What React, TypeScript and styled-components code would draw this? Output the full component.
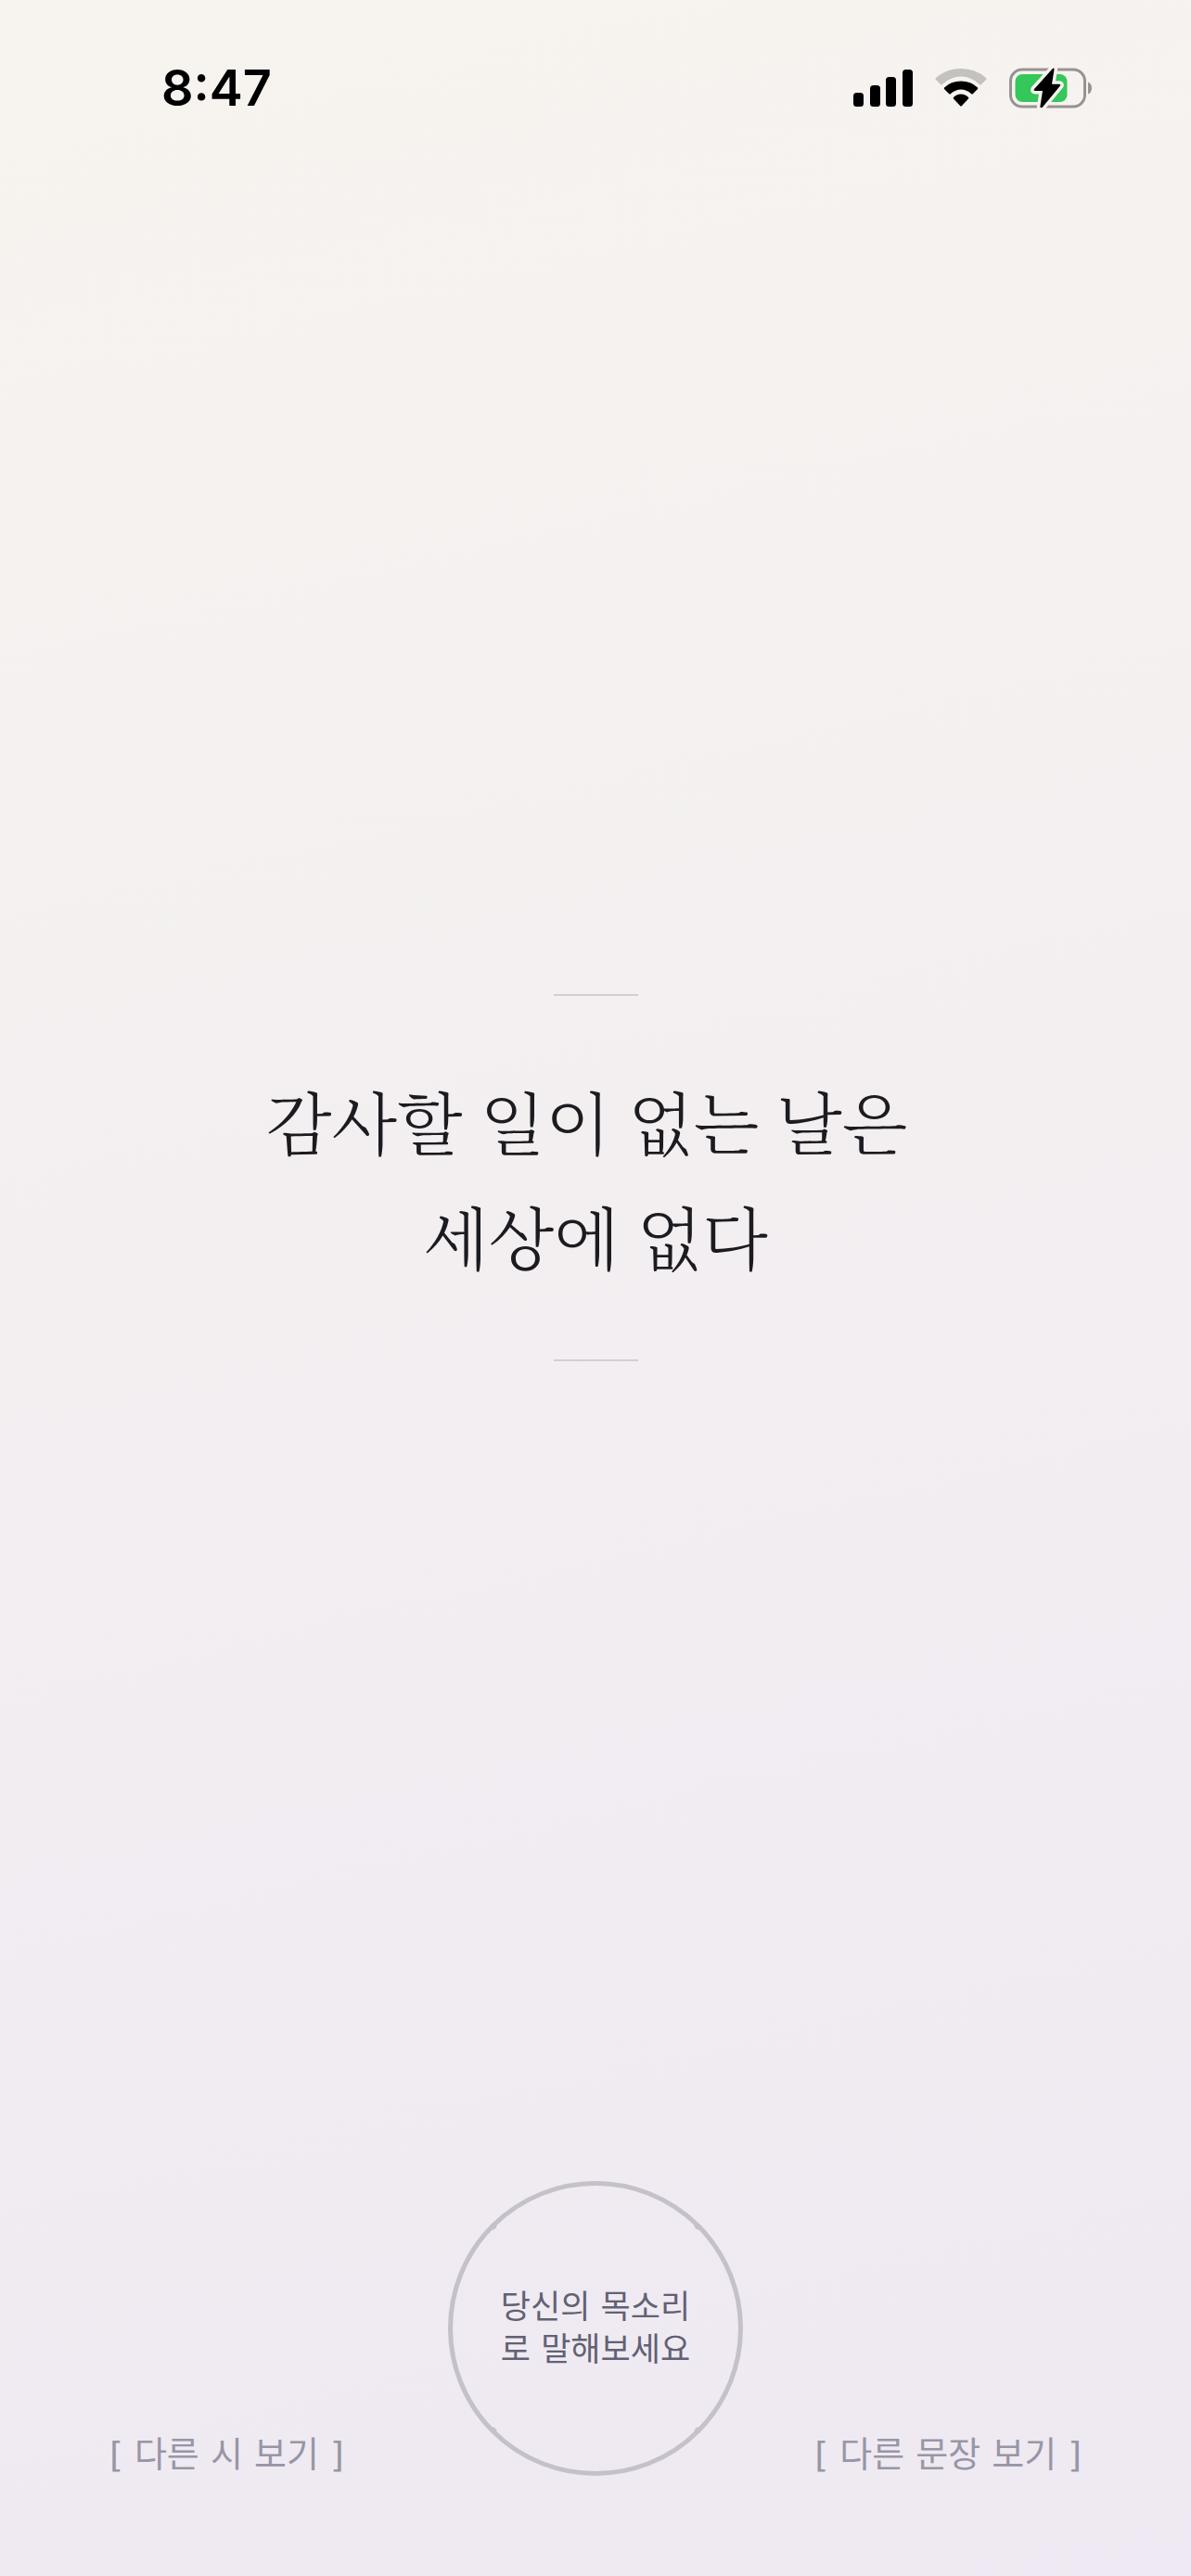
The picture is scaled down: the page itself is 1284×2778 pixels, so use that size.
import React from "react";
import styled, { createGlobalStyle } from "styled-components";

const Global = createGlobalStyle`
  * { box-sizing: border-box; }
  body { margin: 0; }
`;

const Screen = styled.main`
  min-height: 100vh;
  display: flex;
  flex-direction: column;
  font-family: "DejaVu Sans", "Noto Sans CJK KR", sans-serif;
  background: linear-gradient(167deg, #f7f4ef 0%, #f3eff1 46%, #eee9f2 100%);
`;

const StatusBar = styled.header`
  display: flex;
  justify-content: space-between;
  align-items: center;
  height: 190px;
  padding: 0 106px 0 174px;
  color: #000;
`;

const Clock = styled.time`
  font: 600 54px/64px Inter, sans-serif;
`;

const StatusIcons = styled.div`
  display: flex;
  align-items: center;
  gap: 24px;
`;

const QuoteArea = styled.section`
  flex: 1;
  display: flex;
  flex-direction: column;
  align-items: center;
  justify-content: center;
  gap: 72px;
  padding-bottom: 2px;
`;

const Divider = styled.hr`
  width: 91px;
  height: 2px;
  margin: 0;
  border: 0;
  background: #d2cfd1;
`;

const Quote = styled.h1`
  margin: 0;
  font-family: "Noto Serif CJK KR", "Noto Sans CJK KR", serif;
  font-size: 73px;
  font-weight: 300;
  line-height: 124px;
  text-align: center;
  color: #1c1b20;
`;

const Actions = styled.footer`
  display: grid;
  grid-template-columns: 1fr auto 1fr;
  align-items: end;
  padding: 0 118px 108px;
`;

const TextButton = styled.button<{ $align: "start" | "end" }>`
  justify-self: ${(p) => p.$align};
  padding: 0;
  border: 0;
  background: none;
  font-family: inherit;
  font-size: 38px;
  line-height: 46px;
  white-space: nowrap;
  color: #9896a6;
`;

const ring = "#c4c1c8";

/* The ring carries a small bead at each diagonal. */
const VoiceButton = styled.button`
  width: 318px;
  height: 318px;
  padding: 0;
  border: 5px solid ${ring};
  border-radius: 50%;
  background:
    radial-gradient(circle at 48px 48px, ${ring} 4px, transparent 5px) border-box,
    radial-gradient(circle at 270px 48px, ${ring} 4px, transparent 5px) border-box,
    radial-gradient(circle at 48px 270px, ${ring} 4px, transparent 5px) border-box,
    radial-gradient(circle at 270px 270px, ${ring} 4px, transparent 5px) border-box;
  font-family: inherit;
  font-size: 35px;
  line-height: 46px;
  color: #626174;
`;

function SignalIcon() {
  return (
    <svg width="64" height="42" viewBox="0 0 64 42" aria-hidden="true">
      <rect x="0" y="26" width="11" height="15" rx="3.5" />
      <rect x="18" y="18" width="11" height="23" rx="3.5" />
      <rect x="35" y="9" width="11" height="32" rx="3.5" />
      <rect x="53" y="1" width="11" height="40" rx="3.5" />
    </svg>
  );
}

function WifiIcon() {
  return (
    <svg width="56" height="42" viewBox="0 0 56 42" aria-hidden="true">
      <path d="M1 12Q0 11 1 10Q12 0 28 0T55 10Q56 11 55 12L50 17Q49 18 48 17Q39 8.500 28 8.500T8 17Q7 18 6 17Z" fill="#c4c2c0" />
      <path d="M10 22Q9.500 21 10 20.500Q17 13.500 28 13.500T46 20.500Q46.500 21 46 22L41 27Q40 28 39 27Q34 22.500 28 22.500T17 27Q16 28 15 27Z" />
      <path d="M20 32.500Q19.300 31.500 20 31Q23 27.500 28 27.500T36 31Q36.700 31.500 36 32.500L29 40Q28 41 27 40Z" />
    </svg>
  );
}

function BatteryIcon() {
  const bolt = "M47 .8 26.800 23.200Q26 25 28 25H36L33.300 42.500Q34.500 44 36 42.500L55 19.500Q56 18 54 17.700H46L48.600 1.500Q48.400 0 47 .8Z";
  return (
    <svg width="90" height="44" viewBox="0 0 90 44" aria-hidden="true">
      <rect x="1.500" y="2" width="80" height="40" rx="12.500" fill="none" stroke="#969492" strokeWidth="3" />
      <path d="M85 15.500Q89 17 89 22T85 28.500Z" fill="#969492" />
      <rect x="6.500" y="7" width="56" height="30" rx="8" fill="#34c759" />
      <path d={bolt} fill="#f6f3ef" stroke="#f6f3ef" strokeWidth="7" strokeLinejoin="round" />
      <path d={bolt} />
    </svg>
  );
}

export default function App() {
  return (
    <Screen>
      <Global />
      <StatusBar>
        <Clock>8:47</Clock>
        <StatusIcons>
          <SignalIcon />
          <WifiIcon />
          <BatteryIcon />
        </StatusIcons>
      </StatusBar>
      <QuoteArea>
        <Divider />
        <Quote>
          감사할 일이 없는 날은&nbsp;
          <br />
          세상에 없다
        </Quote>
        <Divider />
      </QuoteArea>
      <Actions>
        <TextButton $align="start">[ 다른 시 보기 ]</TextButton>
        <VoiceButton>
          당신의 목소리
          <br />로 말해보세요
        </VoiceButton>
        <TextButton $align="end">[ 다른 문장 보기 ]</TextButton>
      </Actions>
    </Screen>
  );
}
